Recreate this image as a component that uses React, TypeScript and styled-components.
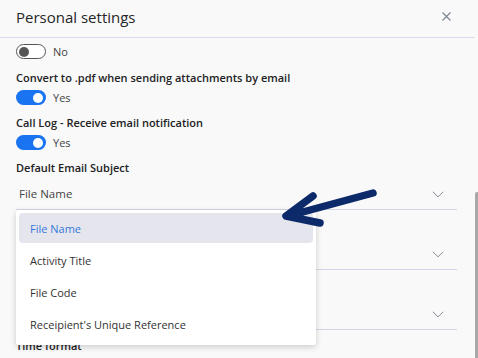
import React from "react";
import styled, { createGlobalStyle } from "styled-components";

const Global = createGlobalStyle`
  html, body { margin: 0; padding: 0; background: #f9f9fa; }
  body { font-family: "Open Sans", "Liberation Sans", sans-serif; color: #222; }
`;

const toggles = [
    { id: 1, label: "", on: false },
    { id: 2, label: "Convert to .pdf when sending attachments by email", on: true },
    { id: 3, label: "Call Log - Receive email notification", on: true },
];

const options = ["File Name", "Activity Title", "File Code", "Receipient's Unique Reference"];

// the two selects under the open menu are covered, only their chevrons show
const hiddenSelects = [1, 2];

const App = () => {
    return <Page>
        <Global/>
        <Main>
            <Header>
                <Title>Personal settings</Title>
                <Close viewBox="0 0 9 9">
                    <path d="M0.5 0.5 L8.5 8.5 M8.5 0.5 L0.5 8.5" stroke="#7a8490" strokeWidth="1.1" fill="none"/>
                </Close>
            </Header>

            <Body>
                {toggles.map(it => <ToggleGroup key={it.id}>
                    {it.label && <Label>{it.label}</Label>}
                    <ToggleRow>
                        <Switch $on={it.on}><Knob $on={it.on}/></Switch>
                        <SwitchText>{it.on ? "Yes" : "No"}</SwitchText>
                    </ToggleRow>
                </ToggleGroup>)}

                <SelectGroup>
                    <Label>Default Email Subject</Label>
                    <Select>
                        <SelectValue>File Name</SelectValue>
                        <Chevron/>
                    </Select>
                    <Menu>
                        {options.map((o, i) => <MenuItem key={o} $active={i === 0}>{o}</MenuItem>)}
                    </Menu>
                    <Pointer viewBox="0 0 120 52">
                        <path d="M110 15 L25 38 M50 18 L23 38 L57 45" stroke="#0c2a6a" strokeWidth="7.5"
                              strokeLinecap="round" strokeLinejoin="round" fill="none"/>
                    </Pointer>
                </SelectGroup>

                {hiddenSelects.map(id => <SelectGroup key={id}>
                    <Label/>
                    <Select><SelectValue/><Chevron/></Select>
                </SelectGroup>)}

                <SelectGroup>
                    <Label>Time format</Label>
                </SelectGroup>
            </Body>
        </Main>
        <Scroll><Thumb/></Scroll>
    </Page>
}
export default App

const Chevron = () => <ChevronSvg viewBox="0 0 12 7">
    <path d="M0.8 0.8 L6 5.8 L11.2 0.8" stroke="#8a8f98" strokeWidth="1" fill="none"/>
</ChevronSvg>

const Page = styled.div`
  width: 478px; height: 358px;
  display: flex;
  overflow: hidden;
  background: #f9f9fa;
`

const Main = styled.div`
  width: 475px;
  display: flex; flex-direction: column;
`

const Header = styled.div`
  height: 38px;
  box-sizing: border-box;
  border-bottom: 1px solid #dbdaee;
  padding: 0 24px 0 16px;
  display: flex; align-items: center; justify-content: space-between;
  flex-shrink: 0;
`

const Title = styled.div`
  font-size: 15px;
  color: #262626;
  margin-top: -4px;
`

const Close = styled.svg`
  width: 9px; height: 9px;
  margin-top: -4px;
`

const Body = styled.div`
  padding: 6px 0 0 16px;
  display: flex; flex-direction: column;
`

const ToggleGroup = styled.div`
  display: flex; flex-direction: column;
  gap: 5px;
  margin-bottom: 10px;
  &:first-child { margin-bottom: 11px; }
`

const Label = styled.div`
  height: 15px;
  font-size: 11px; font-weight: 600;
  line-height: 15px;
  color: #222;
`

const ToggleRow = styled.div`
  display: flex; align-items: center; gap: 7px;
  height: 15px;
`

const Switch = styled.div<{ $on: boolean }>`
  width: 30px; height: 15px;
  box-sizing: border-box;
  border-radius: 8px;
  background: ${p => p.$on ? "#1a73f0" : "#fff"};
  border: ${p => p.$on ? "none" : "1px solid #555"};
  position: relative;
`

const Knob = styled.div<{ $on: boolean }>`
  position: absolute;
  top: 50%; transform: translateY(-50%);
  width: 10px; height: 10px; border-radius: 50%;
  background: ${p => p.$on ? "#fff" : "#555"};
  ${p => p.$on ? "right: 3px;" : "left: 2px;"}
`

const SwitchText = styled.div`
  font-size: 11px; color: #444;
`

const SelectGroup = styled.div`
  position: relative;
  height: 60px;
  display: flex; flex-direction: column;
  &:last-child { margin-top: -2px; }
`

const Select = styled.div`
  width: 441px; height: 35px;
  box-sizing: border-box;
  border-bottom: 1px solid #d6d5e8;
  padding: 2px 13px 0 3px;
  display: flex; align-items: center; justify-content: space-between;
`

const SelectValue = styled.div`
  font-size: 11.5px; color: #444;
`

const ChevronSvg = styled.svg`
  width: 12px; height: 7px;
  margin-top: 2px;
`

const Menu = styled.div`
  position: absolute;
  left: 0; top: 50px;
  width: 300px;
  box-sizing: border-box;
  padding: 3px 3px 6px;
  background: #fff;
  border-radius: 2px;
  box-shadow: 0 2px 6px rgba(0,0,0,0.18);
  display: flex; flex-direction: column; gap: 2px;
  z-index: 2;
`

const MenuItem = styled.div<{ $active: boolean }>`
  height: 30px;
  padding-left: 11px;
  border-radius: 4px;
  display: flex; align-items: center;
  font-size: 11px;
  color: ${p => p.$active ? "#3479d8" : "#333"};
  background: ${p => p.$active ? "#e5e5ee" : "transparent"};
`

const Pointer = styled.svg`
  position: absolute;
  left: 247px; top: 18px;
  width: 120px; height: 52px;
  z-index: 3;
`

const Scroll = styled.div`
  width: 3px;
  display: flex; flex-direction: column; justify-content: flex-end;
`

const Thumb = styled.div`
  height: 166px;
  background: #a9a9a9;
  border-radius: 2px 0 0 0;
`
